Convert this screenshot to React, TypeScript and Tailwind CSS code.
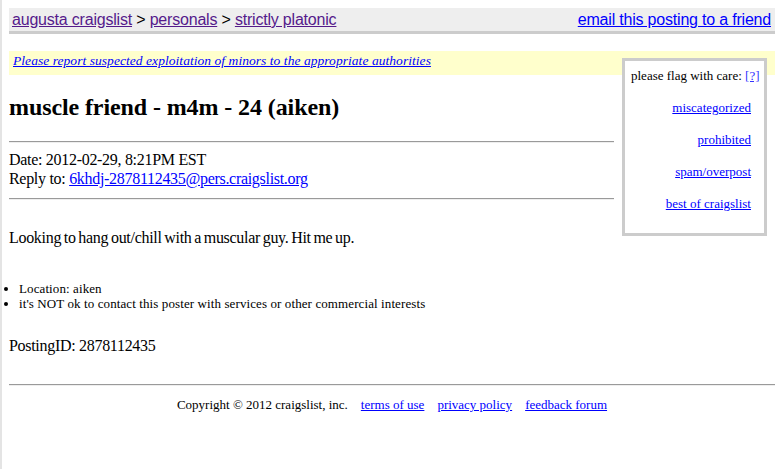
import React from "react";

const serif = "font-['Liberation_Serif','Times_New_Roman',serif]";
const sans = "font-['Liberation_Sans',Arial,sans-serif]";

const flagLinks = ["miscategorized", "prohibited", "spam/overpost", "best of craigslist"];

export default function App() {
  return (
    <div className={`min-h-screen bg-white border-l-2 border-[#e4e4e4] pl-[7px] pr-[8px] pt-2 text-black ${serif}`}>
      {/* top bar */}
      <div className={`flex justify-between bg-[#eeeeee] border-b-[3px] border-[#cccccc] pl-[3px] pr-[4px] pt-[3px] pb-[2px] text-[16px] leading-[18px] tracking-[-0.2px] ${sans}`}>
        <div>
          <a href="#" className="underline text-[#551a8b]">augusta craigslist</a>
          {" > "}
          <a href="#" className="underline text-[#551a8b]">personals</a>
          {" > "}
          <a href="#" className="underline text-[#551a8b]">strictly platonic</a>
        </div>
        <a href="#" className="underline text-[#0000ff]">email this posting to a friend</a>
      </div>

      {/* warning bar + flag box */}
      <div className="mt-[17px] h-[24px] bg-[#ffffcc] pl-[4px] pt-[2px] text-[13.5px] leading-[16px] italic tracking-[0.05px]">
        <div className="float-right not-italic tracking-normal mt-[5px] ml-[8px] mr-[8px] w-[145px] border-[3px] border-[#cccccc] bg-white pl-[6px] pr-[13px] pt-[7px] pb-[22px] text-[13px] leading-[15px]">
          <div className="whitespace-nowrap">
            please flag with care: <a href="#" className="underline text-[#3333ff]">[?]</a>
          </div>
          <div className="mt-[17px] flex flex-col items-end gap-[17px]">
            {flagLinks.map((l) => (
              <a key={l} href="#" className="underline text-[#0000ff] whitespace-nowrap">
                {l}
              </a>
            ))}
          </div>
        </div>
        <a href="#" className="underline text-[#0000ff]">
          Please report suspected exploitation of minors to the appropriate authorities
        </a>
      </div>

      <h2 className="mt-[18px] text-[24px] leading-[28px] font-bold tracking-[-0.1px]">muscle friend - m4m - 24 (aiken)</h2>

      <hr className="mt-[20px] overflow-hidden border-t border-b border-t-[#9a9a9a] border-b-[#eeeeee]" />

      <div className="mt-[7px] text-[16px] leading-[19px] tracking-[-0.3px]">
        <div>Date: 2012-02-29, 8:21PM EST</div>
        <div>
          Reply to: <a href="#" className="underline text-[#0000ff]">6khdj-2878112435@pers.craigslist.org</a>
        </div>
      </div>

      <hr className="mt-[10px] overflow-hidden border-t border-b border-t-[#9a9a9a] border-b-[#eeeeee]" />

      <p className="mt-[28px] text-[16px] leading-[19px] tracking-[-0.3px] [word-spacing:-1px]">
        Looking to hang out/chill with a muscular guy. Hit me up.
      </p>

      <ul className="mt-[34px] -ml-[9px] pl-[19px] list-disc text-[13px] leading-[15px] tracking-[0.1px]">
        <li>Location: aiken</li>
        <li>it's NOT ok to contact this poster with services or other commercial interests</li>
      </ul>

      <p className="mt-[25px] text-[16px] leading-[19px] tracking-[-0.3px]">PostingID: 2878112435</p>

      <hr className="mt-[29px] overflow-hidden border-t border-b border-t-[#9a9a9a] border-b-[#eeeeee]" />

      <div className="mt-[11px] text-center text-[13px] leading-[15px]">
        Copyright © 2012 craigslist, inc.
        <a href="#" className="ml-[13px] underline text-[#0000ff]">terms of use</a>
        <a href="#" className="ml-[13px] underline text-[#0000ff]">privacy policy</a>
        <a href="#" className="ml-[13px] underline text-[#0000ff]">feedback forum</a>
      </div>
    </div>
  );
}
